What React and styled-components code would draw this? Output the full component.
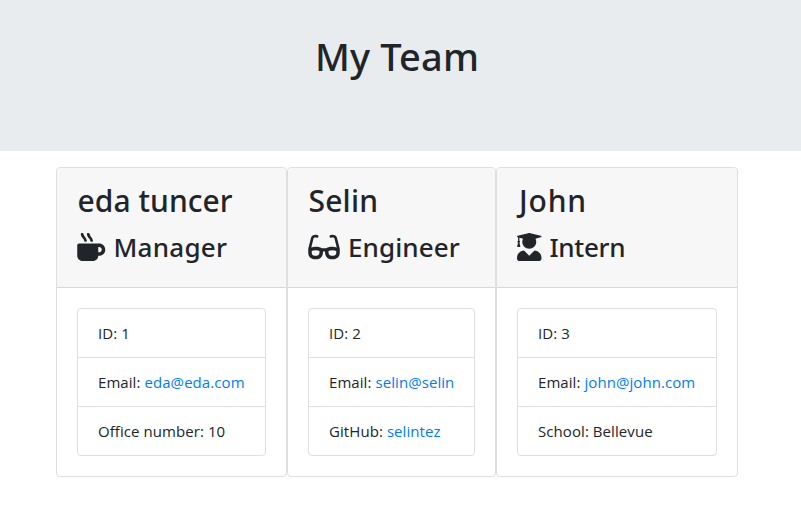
import React from "react";
import styled, { createGlobalStyle } from "styled-components";
import { FaMugHot, FaGlasses, FaUserGraduate } from "react-icons/fa";

const Global = createGlobalStyle`
  *, *::before, *::after { box-sizing: border-box; }
  body {
    margin: 0;
    background: #fff;
    color: #212529;
    font: 400 16px/24px "Open Sans", "Noto Sans", sans-serif;
    overflow: hidden;
  }
`;
const Banner = styled.header`
  height: 151px;
  padding-top: 32px;
  background: #e9ecef;
  display: flex;
  justify-content: center;
`;
const Title = styled.h1`
  margin: 0 7px 0 0;
  font: 500 38px/48px "Noto Sans", sans-serif;
  letter-spacing: 0.15px;
  white-space: nowrap;
`;
const Team = styled.main`
  display: flex;
  padding: 16px 0 0 56px;
`;
const Card = styled.article`
  width: ${(p) => p.$width}px;
  height: 310px;
  flex: none;
  border: 1px solid rgba(0, 0, 0, 0.125);
  border-radius: 4px;
`;
const CardHeader = styled.div`
  height: 120px;
  padding: 14px 20px 0;
  background: #f7f7f7;
  border-bottom: 1px solid rgba(0, 0, 0, 0.125);
  border-radius: 3px 3px 0 0;
`;
const Name = styled.h2`
  margin: 0 0 9px;
  padding-left: ${(p) => p.$indent}px;
  font: 500 30px/38px "Noto Sans", sans-serif;
  letter-spacing: ${(p) => p.$tracking}px;
  white-space: nowrap;
`;
const Role = styled.h3`
  margin: 0;
  display: flex;
  align-items: center;
  gap: 8px;
  font: 500 26px/36px "Noto Sans", sans-serif;
  letter-spacing: ${(p) => p.$tracking}px;
  white-space: nowrap;
  svg {
    flex: none;
    width: ${(p) => p.$iconWidth}px;
    height: 28px;
  }
`;
const List = styled.ul`
  list-style: none;
  margin: 20px;
  padding: 0;
  border: 1px solid rgba(0, 0, 0, 0.125);
  border-radius: 4px;
`;
const Item = styled.li`
  height: 48px;
  padding: 12px 20px;
  font-size: 15px;
  letter-spacing: 0.07px;
  white-space: nowrap;
  & + & {
    height: 49px;
    border-top: 1px solid rgba(0, 0, 0, 0.125);
  }
`;
const Link = styled.a`
  color: #007bff;
  text-decoration: none;
`;

const members = [
  { name: "eda tuncer", indent: 0.5, nameTracking: 0.05, role: "Manager", Icon: FaMugHot, iconWidth: 28.5, roleTracking: 0.25, width: 231, id: 1, email: "eda@eda.com", label: "Office number", value: "10" },
  { name: "Selin", indent: 0.5, nameTracking: 0.2, role: "Engineer", Icon: FaGlasses, iconWidth: 32, roleTracking: 0.1, width: 209, id: 2, email: "selin@selin", label: "GitHub", value: "selintez", link: true },
  { name: "John", indent: 2, nameTracking: 0.8, role: "Intern", Icon: FaUserGraduate, iconWidth: 24.5, roleTracking: -0.35, width: 242, id: 3, email: "john@john.com", label: "School", value: "Bellevue" },
];

export default function App() {
  return (
    <>
      <Global />
      <Banner><Title>My Team</Title></Banner>
      <Team>
        {members.map((m) => (
          <Card key={m.id} $width={m.width}>
            <CardHeader>
              <Name $indent={m.indent} $tracking={m.nameTracking}>{m.name}</Name>
              <Role $iconWidth={m.iconWidth} $tracking={m.roleTracking}><m.Icon />{m.role}</Role>
            </CardHeader>
            <List>
              <Item>ID: {m.id}</Item>
              <Item>Email: <Link>{m.email}</Link></Item>
              <Item>{m.label}: {m.link ? <Link>{m.value}</Link> : m.value}</Item>
            </List>
          </Card>
        ))}
      </Team>
    </>
  );
}
